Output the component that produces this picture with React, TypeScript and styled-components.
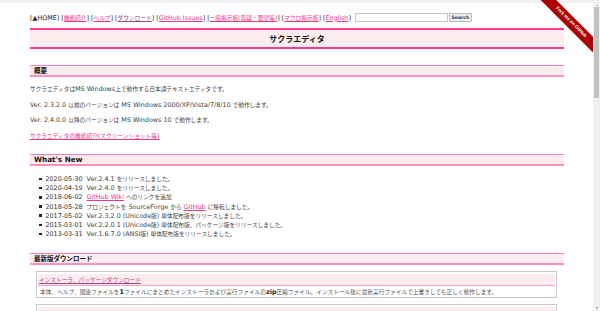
import React from 'react';
import styled, { createGlobalStyle } from 'styled-components';

// Base font is the CJK face; latin runs are bumped up a little so that
// their width matches the Verdana-ish look of the original page.
const GlobalStyle = createGlobalStyle`
  html, body {
    margin: 0;
    padding: 0;
    background: #fff;
  }
  body {
    font-family: "Noto Sans CJK JP", "DejaVu Sans", sans-serif;
    color: #444;
  }
`;

const PINK = '#f2357f';
const VISITED = '#a8457f';

const Screen = styled.div`
  position: relative;
  width: 600px;
  height: 311px;
  display: flex;
  flex-direction: column;
  overflow: hidden;
  background: #fff;
`;

const TopStrip = styled.div`
  flex: none;
  height: 3px;
  background: #f1f1f1;
`;

const Viewport = styled.div`
  flex: 1;
  display: flex;
  min-height: 0;
`;

const Page = styled.div`
  flex: 1;
  overflow: hidden;
  padding: 0 29px 0 30px;
`;

const Scrollbar = styled.div`
  flex: none;
  width: 7px;
  display: flex;
  flex-direction: column;
  align-items: center;
  background: #f1f1f1;
`;

const Arrow = styled.div<{ $down?: boolean }>`
  flex: none;
  width: 0;
  height: 0;
  margin: ${(p) => (p.$down ? '0 0 2px' : '1px 0 0')};
  border-left: 1.5px solid transparent;
  border-right: 1.5px solid transparent;
  ${(p) => (p.$down ? 'border-top: 2px solid #777;' : 'border-bottom: 2px solid #a3a3a3;')}
`;

const Thumb = styled.div`
  flex: none;
  width: 5px;
  height: 91px;
  margin-top: 1px;
  background: #c1c1c1;
`;

const Track = styled.div`
  flex: 1;
`;

const Latin = styled.span`
  font-family: "DejaVu Sans", sans-serif;
  font-size: 1.12em;
`;

const Mixed: React.FC<{ text: string }> = ({ text }) => (
  <>
    {text.split(/([\x20-\x7e]+)/).map((part, i) =>
      /^[\x20-\x7e]+$/.test(part) ? <Latin key={i}>{part}</Latin> : part
    )}
  </>
);

const Nav = styled.div`
  display: flex;
  align-items: center;
  height: 9px;
  margin-top: 10px;
  font-size: 5.7px;
  line-height: 9px;
  color: #222;
  white-space: nowrap;
`;

const NavLink = styled.a<{ $visited?: boolean }>`
  color: ${(p) => (p.$visited ? VISITED : PINK)};
  text-decoration: underline;
`;

const SearchInput = styled.input`
  box-sizing: border-box;
  width: 93px;
  height: 9px;
  margin: 0 0 0 4px;
  padding: 0;
  border: 1px solid #c4c4c4;
  background: #fff;
`;

const SearchButton = styled.button`
  box-sizing: border-box;
  width: 23px;
  height: 9px;
  margin-left: 1px;
  padding: 0;
  border: 1px solid #b9b9b9;
  border-radius: 1px;
  background: #efefef;
  font-family: "DejaVu Sans", sans-serif;
  font-size: 4.6px;
  font-weight: bold;
  color: #333;
  line-height: 7px;
`;

const Title = styled.h1`
  margin: 6px 0 0;
  height: 17px;
  border-top: 2px solid #ff3b8d;
  border-bottom: 2px solid #ff3b8d;
  background: #fdecee;
  text-align: center;
  font-size: 8px;
  font-weight: bold;
  line-height: 17px;
  color: #111;
`;

const Heading = styled.h2<{ $gap: number }>`
  margin: ${(p) => p.$gap}px 0 0;
  height: 9px;
  padding-left: 4px;
  border-top: 1px solid #ff80b8;
  border-bottom: 2px solid #ff8fbf;
  background: #fdeced;
  font-size: 6.5px;
  font-weight: bold;
  line-height: 9px;
  color: #111;
`;

const Para = styled.p`
  height: 9px;
  margin: 0 0 6.5px;
  font-size: 5.7px;
  line-height: 9px;
  white-space: nowrap;
  &:first-of-type {
    margin-top: 7px;
  }
`;

const TextLink = styled.a<{ $visited?: boolean }>`
  color: ${(p) => (p.$visited ? VISITED : PINK)};
  text-decoration: underline;
`;

const News = styled.ul`
  list-style: none;
  margin: 8px 0 0;
  padding: 0 0 0 9px;
  font-size: 5.7px;
  line-height: 9.2px;
`;

const NewsItem = styled.li`
  height: 9.2px;
  white-space: nowrap;
  &::before {
    content: '';
    display: inline-block;
    vertical-align: middle;
    width: 2.5px;
    height: 2.5px;
    margin: 0 4px 1px 0;
    background: #222;
  }
`;

const DateText = styled.span`
  font-family: "DejaVu Sans", sans-serif;
  font-size: 1.12em;
  color: #333;
  margin-right: 4px;
`;

const DownloadBox = styled.div`
  margin: 6px 7px 0 6px;
  padding: 2px 1px 1px;
  border: 1px solid #c9c9c9;
`;

const BoxHead = styled.div`
  height: 11px;
  padding-left: 1px;
  border-bottom: 1px solid #ff9ec8;
  background: #fdeced;
  font-size: 5.7px;
  line-height: 11px;
`;

const BoxText = styled.div`
  height: 9px;
  padding: 1px 2px 0;
  font-size: 5.7px;
  line-height: 9px;
  white-space: nowrap;
  color: #555;
  b {
    color: #222;
  }
`;

const RibbonClip = styled.div`
  position: absolute;
  top: 0;
  right: 7px;
  width: 53px;
  height: 53px;
  overflow: hidden;
  pointer-events: none;
`;

const Ribbon = styled.div`
  position: absolute;
  left: -9.5px;
  top: 17px;
  width: 80px;
  height: 10.5px;
  transform: rotate(45deg);
  background: #a00;
  color: #fff;
  font-family: "Liberation Sans", sans-serif;
  font-size: 4.6px;
  font-weight: bold;
  line-height: 10.5px;
  text-align: center;
  white-space: nowrap;
`;

const navItems: { label: string; visited?: boolean }[] = [
  { label: '機能紹介' },
  { label: 'ヘルプ' },
  { label: 'ダウンロード', visited: true },
  { label: 'GitHub Issues' },
  { label: '一般掲示板(質疑・要望等)' },
  { label: 'マクロ掲示板' },
  { label: 'English' },
];

const App: React.FC = () => {
  return (
    <Screen>
      <GlobalStyle />
      <TopStrip />
      <Viewport>
        <Page>
          <Nav>
            <span>
              <Latin>[▲HOME]</Latin>
              {navItems.map((item) => (
                <React.Fragment key={item.label}>
                  <Latin> [</Latin>
                  <NavLink href="#" $visited={item.visited}>
                    <Mixed text={item.label} />
                  </NavLink>
                  <Latin>]</Latin>
                </React.Fragment>
              ))}
            </span>
            <SearchInput type="text" />
            <SearchButton>Search</SearchButton>
          </Nav>

          <Title>サクラエディタ</Title>

          <Heading $gap={16}>概要</Heading>
          <Para>
            <Mixed text="サクラエディタはMS Windows上で動作する日本語テキストエディタです。" />
          </Para>
          <Para>
            <Mixed text="Ver. 2.3.2.0 以前のバージョンは MS Windows 2000/XP/Vista/7/8/10 で動作します。" />
          </Para>
          <Para>
            <Mixed text="Ver. 2.4.0.0 以降のバージョンは MS Windows 10 で動作します。" />
          </Para>
          <Para>
            <TextLink href="#">
              <Mixed text="サクラエディタの機能紹介(スクリーンショット等)" />
            </TextLink>
          </Para>

          <Heading $gap={14.5}>
            <Latin>What's New</Latin>
          </Heading>
          <News>
            <NewsItem>
              <DateText>2020-05-30</DateText>
              <Mixed text="Ver.2.4.1 をリリースしました。" />
            </NewsItem>
            <NewsItem>
              <DateText>2020-04-19</DateText>
              <Mixed text="Ver.2.4.0 をリリースしました。" />
            </NewsItem>
            <NewsItem>
              <DateText>2018-06-02</DateText>
              <TextLink href="#">
                <Latin>GitHub Wiki</Latin>
              </TextLink>
              <Latin> </Latin>へのリンクを追加
            </NewsItem>
            <NewsItem>
              <DateText>2018-05-28</DateText>
              <Mixed text="プロジェクトを SourceForge から " />
              <TextLink href="#">
                <Latin>GitHub</Latin>
              </TextLink>
              <Latin> </Latin>に移転しました。
            </NewsItem>
            <NewsItem>
              <DateText>2017-05-02</DateText>
              <Mixed text="Ver.2.3.2.0 (Unicode版) 単体配布版をリリースしました。" />
            </NewsItem>
            <NewsItem>
              <DateText>2015-03-01</DateText>
              <Mixed text="Ver.2.2.0.1 (Unicode版) 単体配布版、パッケージ版をリリースしました。" />
            </NewsItem>
            <NewsItem>
              <DateText>2013-03-31</DateText>
              <Mixed text="Ver.1.6.7.0 (ANSI版) 単体配布版をリリースしました。" />
            </NewsItem>
          </News>

          <Heading $gap={15}>最新版ダウンロード</Heading>
          <DownloadBox>
            <BoxHead>
              <TextLink href="#" $visited>
                インストーラ、パッケージダウンロード
              </TextLink>
            </BoxHead>
            <BoxText>
              本体、ヘルプ、関連ファイルを<b><Latin>1</Latin></b>ファイルにまとめたインストーラおよび実行ファイルの
              <b><Latin>zip</Latin></b>圧縮ファイル。インストール後に最新実行ファイルで上書きしても正しく動作します。
            </BoxText>
          </DownloadBox>
          <DownloadBox>
            <BoxHead />
          </DownloadBox>
        </Page>
        <Scrollbar>
          <Arrow />
          <Thumb />
          <Track />
          <Arrow $down />
        </Scrollbar>
      </Viewport>
      <RibbonClip>
        <Ribbon>Fork me on GitHub</Ribbon>
      </RibbonClip>
    </Screen>
  );
};

export default App;
